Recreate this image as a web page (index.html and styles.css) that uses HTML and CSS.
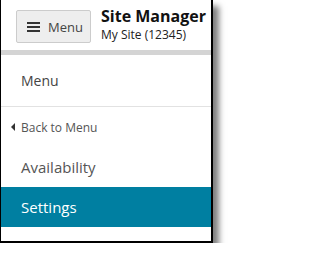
FILE: index.html
```html
<!DOCTYPE html>
<html>
<head>
<meta charset="utf-8">
<link rel="stylesheet" href="styles.css">
</head>
<body>
<div class="frame">
  <header class="header">
    <button class="menu-btn">
      <svg class="burger" width="13" height="10" viewBox="0 0 13 10"><rect x="0" y="0" width="13" height="2" fill="#333"/><rect x="0" y="4" width="13" height="2" fill="#333"/><rect x="0" y="8" width="13" height="2" fill="#333"/></svg>
      <span>Menu</span>
    </button>
    <div class="title">
      <div class="title-main">Site Manager</div>
      <div class="title-sub">My Site (12345)</div>
    </div>
  </header>
  <div class="bar"></div>
  <div class="section-label">Menu</div>
  <div class="back"><span class="tri"></span>Back to Menu</div>
  <div class="item">Availability</div>
  <div class="item active">Settings</div>
  <div class="foot"></div>
</div>
</body>
</html>
```

FILE: styles.css
```css
html, body {
  margin: 0;
  padding: 0;
  background: #fff;
}
body {
  font-family: "Open Sans", "Liberation Sans", sans-serif;
  color: #333;
}
.frame {
  width: 210px;
  border-left: 1px solid #000;
  border-right: 2px solid #000;
  border-bottom: 2px solid #000;
  box-shadow: 6px 6px 6px rgba(0,0,0,0.5);
  background: #fff;
}
.header {
  height: 50px;
  display: flex;
  align-items: flex-start;
  box-sizing: border-box;
  padding: 10px 0 0 15px;
}
.menu-btn {
  width: 75px;
  height: 33px;
  box-sizing: border-box;
  border: 1px solid #ccc;
  border-radius: 2px;
  background: #eee;
  display: flex;
  align-items: center;
  padding: 0 0 0 10px;
  gap: 8px;
  font-family: "Open Sans", "Liberation Sans", sans-serif;
  font-size: 13px;
  color: #444;
}
.burger { display: block; }
.title {
  margin-left: 10px;
  margin-top: -5px;
}
.title-main {
  font-size: 16px;
  font-weight: 700;
  color: #111;
  line-height: 22px;
}
.title-sub {
  font-size: 12px;
  color: #222;
  line-height: 16px;
}
.bar {
  height: 5px;
  background: #d4d4d4;
}
.section-label {
  height: 52px;
  box-sizing: border-box;
  border-bottom: 1px solid #e2e2e2;
  display: flex;
  align-items: center;
  padding-left: 20px;
  font-size: 14px;
  color: #444;
}
.back {
  height: 40px;
  display: flex;
  align-items: center;
  padding-left: 10px;
  font-size: 12px;
  color: #555;
}
.tri {
  width: 0;
  height: 0;
  border-top: 4px solid transparent;
  border-bottom: 4px solid transparent;
  border-right: 4px solid #333;
  margin-right: 6px;
}
.item {
  height: 40px;
  display: flex;
  align-items: center;
  padding-left: 20px;
  font-size: 15px;
  color: #555;
}
.item.active {
  background: #007fa1;
  color: #fff;
}
.foot {
  height: 14px;
}
```
